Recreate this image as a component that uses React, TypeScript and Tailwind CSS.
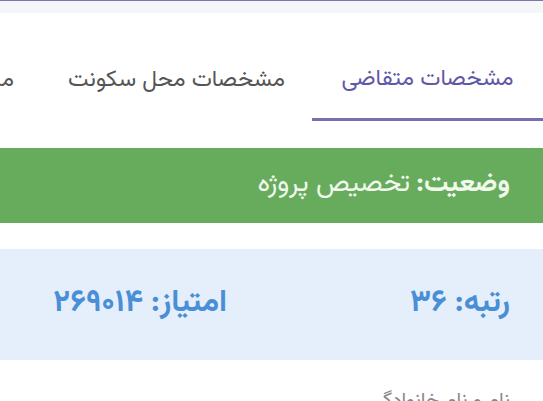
export default function App() {
  const font = { fontFamily: '"Vazirmatn", "Noto Sans Arabic", "DejaVu Sans", sans-serif' };
  return (
    <div dir="rtl" style={font} className="w-[543px] h-[401px] overflow-hidden bg-white">
      <div className="h-px bg-[#7b76b0]" />
      <div className="h-[12px] bg-[#f5f6f8]" />

      <div className="mt-[27px] flex whitespace-nowrap">
        <button className="h-[81px] w-[231px] shrink-0 border-b-[3px] border-[#7670b3] text-[23px] text-[#5f58a8]">
          مشخصات متقاضی
        </button>
        <button className="h-[81px] shrink-0 px-[27px] text-[23px] text-[#555555]">
          مشخصات محل سکونت
        </button>
        <button className="h-[81px] shrink-0 px-[27px] text-[23px] text-[#555555]">
          مشخصات خانوادگی
        </button>
      </div>

      <div className="mt-[27px] flex h-[75px] items-center bg-[#67ab5d] px-[33px] text-[27px] text-[#f1f8ec]">
        <span className="font-bold">وضعیت:</span>
        <span className="mr-1.5">تخصیص پروژه</span>
      </div>

      <div className="mt-[26px] flex h-[111px] items-center bg-[#e4effb] pr-[33px] text-[31px] font-bold text-[#4a8ed6]">
        <div className="w-[283px] shrink-0">رتبه: ۳۶</div>
        <div>امتیاز: ۲۶۹۰۱۴</div>
      </div>

      <div className="mt-[26px] pr-[33px] text-[20px] text-[#888888]">نام و نام خانوادگی</div>
    </div>
  );
}
